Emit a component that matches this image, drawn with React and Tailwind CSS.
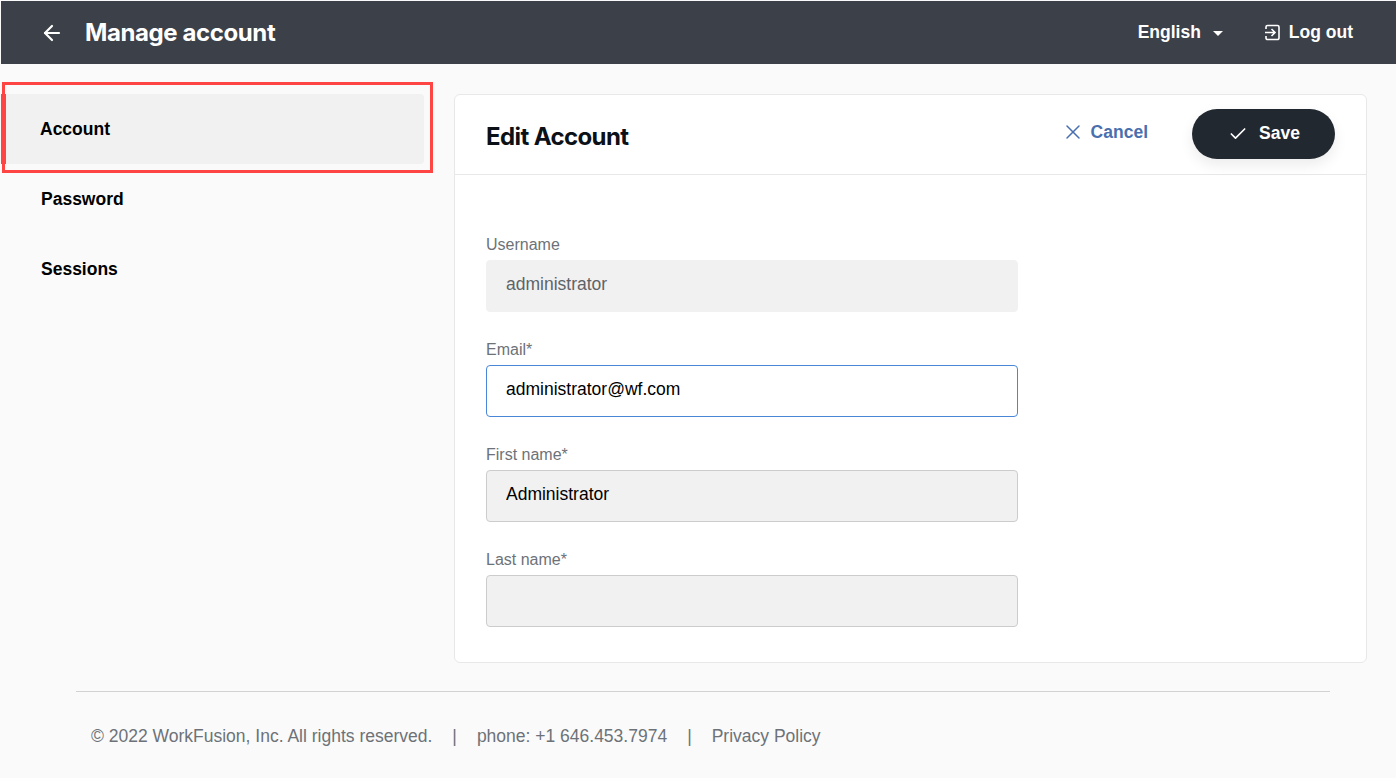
import { ArrowLeft, X, Check } from 'lucide-react';

const fields = [
  { label: 'Username', value: 'administrator', kind: 'locked' },
  { label: 'Email*', value: 'administrator@wf.com', kind: 'active' },
  { label: 'First name*', value: 'Administrator', kind: 'disabled' },
  { label: 'Last name*', value: '', kind: 'disabled' },
];

const inputStyles = {
  locked: 'bg-[#f1f1f1] border-[#f1f1f1] text-[#5f6368]',
  active: 'bg-white border-[#4a86d8] text-black',
  disabled: 'bg-[#f1f1f1] border-[#cccccc] text-black',
};

function LogoutIcon() {
  return (
    <svg width="17" height="17" viewBox="0 0 17 17" fill="none" stroke="currentColor" strokeWidth="1.6">
      <path d="M2 5V3a1.5 1.5 0 0 1 1.5-1.5h10A1.5 1.5 0 0 1 15 3v11a1.5 1.5 0 0 1-1.5 1.5h-10A1.5 1.5 0 0 1 2 14v-2" />
      <path d="M1 8.5h10M7.5 5l3.5 3.5L7.5 12" />
    </svg>
  );
}

export default function App() {
  return (
    <div className="relative w-[1396px] h-[778px] overflow-hidden bg-[#fafafa] pt-px pl-px font-['Liberation_Sans',Arial,sans-serif]">
      <header className="h-[63px] bg-[#3c4048] flex items-center text-white">
        <ArrowLeft className="ml-[39px] w-[24px] h-[24px]" strokeWidth={2.2} />
        <h1 className="ml-[21px] text-[24px] leading-none font-bold font-['Inter',sans-serif] tracking-[-0.4px]">Manage account</h1>
        <div className="ml-auto flex items-center font-bold text-[17.5px]">
          <span>English</span>
          <svg className="ml-[12px] mt-[2px]" width="10" height="5" viewBox="0 0 10 5" fill="currentColor">
            <path d="M0 0h10L5 5z" />
          </svg>
        </div>
        <div className="ml-[41px] mr-[43px] flex items-center gap-[8px] font-bold text-[17.5px]">
          <LogoutIcon />
          <span>Log out</span>
        </div>
      </header>

      <div className="flex pt-[30px]">
        <nav className="w-[423px] shrink-0 font-bold text-[17.5px] text-black">
          <div className="h-[70px] flex items-center pl-[34px] bg-[#f1f1f1] rounded-r border-l-[5px] border-[#ff4444]">Account</div>
          <div className="h-[70px] flex items-center pl-[40px]">Password</div>
          <div className="h-[70px] flex items-center pl-[40px]">Sessions</div>
        </nav>

        <main className="ml-[30px] w-[913px] h-[569px] bg-white border border-[#e8e8e8] rounded-md">
          <div className="h-[80px] border-b border-[#e8e8e8] flex items-center pl-[31px] pr-[31px]">
            <h2 className="mt-[4px] text-[24px] font-bold font-['Inter',sans-serif] tracking-[-0.6px] text-[#0c1118]">Edit Account</h2>
            <button className="ml-auto flex items-center gap-[6px] text-[#4a6fae] font-bold text-[17.5px] -mt-[5px]">
              <X className="w-[24px] h-[24px]" strokeWidth={1.5} />
              Cancel
            </button>
            <button className="ml-[44px] w-[143px] h-[50px] -mt-[1px] pl-[36px] pb-[1px] rounded-full bg-[#212830] text-white font-bold text-[17.5px] flex items-center gap-[11px] shadow-[0_6px_14px_rgba(0,0,0,0.08)]">
              <Check className="w-[20px] h-[20px]" strokeWidth={2} />
              Save
            </button>
          </div>

          <div className="pt-[59px] pl-[31px] flex flex-col gap-[27px]">
            {fields.map((f) => (
              <label key={f.label} className="block w-[532px]">
                <span className="block h-[26px] leading-[22px] text-[16px] text-[#6d7278]">{f.label}</span>
                <input
                  readOnly
                  value={f.value}
                  className={`block w-full h-[52px] px-[19px] pb-[4px] border rounded text-[17.5px] outline-none ${inputStyles[f.kind]}`}
                />
              </label>
            ))}
          </div>
        </main>
      </div>

      <footer className="mt-[28px] ml-[75px] w-[1254px] border-t border-[#d2d2d2] pt-[32px] pl-[15px] flex text-[17.5px] leading-[24px] text-[#6d7278]">
        <span>© 2022 WorkFusion, Inc. All rights reserved.</span>
        <span className="ml-[20px]">|</span>
        <span className="ml-[20px]">phone: +1 646.453.7974</span>
        <span className="ml-[20px]">|</span>
        <span className="ml-[20px]">Privacy Policy</span>
      </footer>

      <div className="absolute left-[2px] top-[82px] w-[431px] h-[91px] border-[3px] border-[#ff4444] pointer-events-none" />
    </div>
  );
}
